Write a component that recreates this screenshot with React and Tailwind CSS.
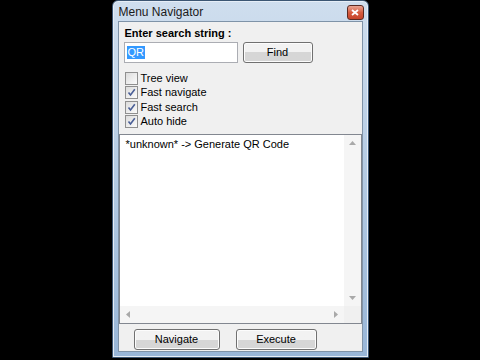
import React from 'react';

const ui = { fontFamily: '"Liberation Sans", Arial, sans-serif' };

function Check({ checked, label }) {
  return (
    <div className="flex h-[14px] items-center">
      <div className="flex h-[13px] w-[13px] items-center justify-center border border-[#8f8f8f] bg-gradient-to-br from-[#dcdcdc] to-[#fbfbfb]">
        {checked && (
          <svg width="9" height="9" viewBox="0 0 9 9">
            <path d="M1.5 4.5 L3.5 7 L7.8 1.2" fill="none" stroke="#4a5f97" strokeWidth="1.6" />
          </svg>
        )}
      </div>
      <span className="ml-[3px] text-[11px] leading-none text-black">{label}</span>
    </div>
  );
}

function Btn({ children, w }) {
  return (
    <div
      className={`flex h-[21px] ${w} items-center justify-center rounded-[3px] border border-[#707070] bg-gradient-to-b from-[#f2f2f2] from-50% to-[#d6d6d6] to-50% text-[11px] text-black shadow-[inset_0_0_0_1px_#fcfcfc]`}
    >
      {children}
    </div>
  );
}

function Arrow({ dir }) {
  const d = {
    up: 'M0 4 L3.5 0 L7 4 Z',
    down: 'M0 0 L7 0 L3.5 4 Z',
    left: 'M4 0 L4 7 L0 3.5 Z',
    right: 'M0 0 L4 3.5 L0 7 Z',
  }[dir];
  const vert = dir === 'up' || dir === 'down';
  return (
    <svg width={vert ? 7 : 4} height={vert ? 4 : 7} viewBox={vert ? '0 0 7 4' : '0 0 4 7'}>
      <path d={d} fill="#a9a9a9" />
    </svg>
  );
}

export default function App() {
  return (
    <div className="flex h-[360px] w-[480px] justify-center bg-black" style={ui}>
      <div className="flex h-[358px] w-[257px] flex-col rounded-t-[6px] border border-[#3c5673] bg-gradient-to-b from-[#cfdeee] via-[#b3cae3] to-[#98b6d8] px-[5px] pb-[5px] shadow-[inset_0_0_0_1px_#e6eef7]">
        <div className="flex h-[20px] items-center justify-between">
          <span className="pl-[1px] pt-[1px] text-[12px] text-[#1a1a1a]">Menu Navigator</span>
          <div className="mr-[-1px] mt-[2px] flex h-[15px] w-[17px] items-center justify-center rounded-[3px] border border-[#5b2a22] bg-gradient-to-b from-[#e8a493] via-[#d65c3f] to-[#c7442a]">
            <svg width="8" height="7" viewBox="0 0 8 7">
              <path d="M1 1 L7 6 M7 1 L1 6" stroke="#fff" strokeWidth="1.8" />
            </svg>
          </div>
        </div>
        <div className="flex flex-1 flex-col border border-[#7f93a8] bg-[#f0f0f0]">
          <div className="px-[5px] pt-[5px]">
            <div className="pl-[1px] text-[11px] font-bold leading-[13px] text-black">Enter search string :</div>
            <div className="mt-[2px] flex items-center">
              <div className="flex h-[21px] w-[114px] items-center border border-[#abadb3] bg-white pl-[2px]">
                <span className="bg-[#3399ff] px-[1px] text-[11px] leading-[13px] text-white">QR</span>
              </div>
              <div className="ml-[5px]">
                <Btn w="w-[70px]">Find</Btn>
              </div>
            </div>
            <div className="mt-[8px] flex flex-col gap-[0.5px] pl-[1px]">
              <Check label="Tree view" />
              <Check checked label="Fast navigate" />
              <Check checked label="Fast search" />
              <Check checked label="Auto hide" />
            </div>
          </div>
          <div className="mt-[5px] flex h-[190px] flex-col border border-[#828790] bg-white">
            <div className="flex flex-1">
              <div className="flex-1 pl-[6px] pt-[3px] text-[11px] leading-[13px] text-black">*unknown* -&gt; Generate QR Code</div>
              <div className="flex w-[17px] flex-col items-center justify-between bg-[#f5f5f5] py-[6px]">
                <Arrow dir="up" />
                <Arrow dir="down" />
              </div>
            </div>
            <div className="flex h-[17px]">
              <div className="flex flex-1 items-center justify-between bg-[#f5f5f5] px-[6px]">
                <Arrow dir="left" />
                <Arrow dir="right" />
              </div>
              <div className="w-[17px] bg-[#f0f0f0]" />
            </div>
          </div>
          <div className="mt-[5px] flex gap-[16px] pl-[15px]">
            <Btn w="w-[86px]">Navigate</Btn>
            <Btn w="w-[81px]">Execute</Btn>
          </div>
        </div>
      </div>
    </div>
  );
}
